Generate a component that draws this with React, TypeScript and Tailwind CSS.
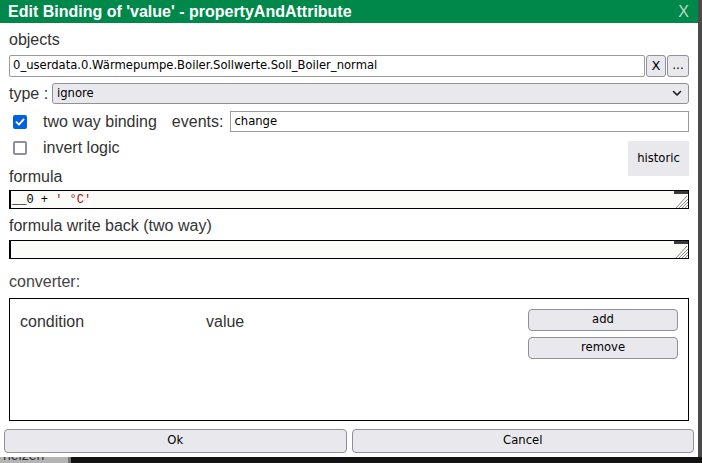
import React from "react";

const ui = { fontFamily: '"DejaVu Sans", sans-serif' };
const lab = { fontFamily: '"Liberation Sans", Arial, sans-serif' };
const mono = { fontFamily: '"Liberation Mono", "DejaVu Sans Mono", monospace' };

function Grip() {
  return (
    <svg width="14" height="17" viewBox="0 0 14 17" className="absolute right-0 top-0">
      <rect x="0" y="0" width="14" height="3" fill="#3a3a3a" />
      <g stroke="#8a8a8a" strokeWidth="1">
        <line x1="13" y1="5" x2="2" y2="17" />
        <line x1="14" y1="8" x2="5" y2="17" />
        <line x1="14" y1="11" x2="8" y2="17" />
        <line x1="14" y1="14" x2="11" y2="17" />
      </g>
    </svg>
  );
}

function Check({ checked }: { checked?: boolean }) {
  return checked ? (
    <span className="flex h-[14px] w-[14px] items-center justify-center rounded-[2px] bg-[#0060df]">
      <svg width="10" height="10" viewBox="0 0 10 10">
        <path d="M1.5 5.2 L4 7.6 L8.6 2.4" stroke="white" strokeWidth="1.8" fill="none" strokeLinecap="round" strokeLinejoin="round" />
      </svg>
    </span>
  ) : (
    <span className="block h-[14px] w-[14px] rounded-[2px] border-2 border-[#8f8f9d] bg-white" />
  );
}

export default function App() {
  return (
    <div className="flex h-[463px] w-[702px] flex-col overflow-hidden bg-[#111]">
      <div className="flex h-[457px]">
        <div className="flex w-[698px] flex-col bg-white">
          <div className="flex h-[23px] items-center justify-between bg-[#00884b] pl-[8px] pr-[9px]">
            <span className="text-[16px] font-bold text-white" style={lab}>
              Edit Binding of 'value' - propertyAndAttribute
            </span>
            <span className="text-[16px] text-[#b9d9c5]" style={lab}>X</span>
          </div>

          <div className="flex flex-col px-[9px] text-[#333]">
            <div className="mt-[8px] h-[18px] text-[16px] leading-[18px]" style={lab}>objects</div>
            <div className="mt-[6px] flex h-[22px] gap-[1px]">
              <div className="flex flex-1 items-center rounded-[2px] border border-[#9a9a9a] bg-white px-[3px] text-[11.6px] text-black" style={ui}>
                0_userdata.0.Wärmepumpe.Boiler.Sollwerte.Soll_Boiler_normal
              </div>
              <div className="flex w-[20px] items-center justify-center rounded-[3px] border border-[#8f8f9d] bg-[#e9e9ed] text-[13px] text-black" style={ui}>X</div>
              <div className="flex w-[22px] items-center justify-center rounded-[3px] border border-[#8f8f9d] bg-[#e9e9ed] pb-[3px] text-[12px] text-black" style={ui}>...</div>
            </div>

            <div className="mt-[6px] flex h-[21px] items-center">
              <span className="w-[43px] text-[16px]" style={lab}>type :</span>
              <div className="flex h-[21px] flex-1 items-center justify-between rounded-[3px] border border-[#8f8f9d] bg-[#e9e9ed] pl-[4px] pr-[6px] text-[11.6px] text-black" style={ui}>
                <span>ignore</span>
                <svg width="10" height="7" viewBox="0 0 10 7">
                  <path d="M1.5 1.5 L5 5 L8.5 1.5" stroke="#1a1a1a" strokeWidth="1.6" fill="none" strokeLinecap="round" strokeLinejoin="round" />
                </svg>
              </div>
            </div>

            <div className="mt-[7px] flex h-[21px] items-center">
              <span className="ml-[4px] mr-[16px]"><Check checked /></span>
              <span className="text-[16px]" style={lab}>two way binding</span>
              <span className="ml-[15px] text-[16px]" style={lab}>events:</span>
              <div className="ml-[7px] flex h-[21px] flex-1 items-center border border-[#9a9a9a] px-[3px] text-[11.6px] text-black" style={ui}>change</div>
            </div>

            <div className="mt-[9px] flex">
              <div className="flex flex-1 flex-col">
                <div className="flex h-[14px] items-center">
                  <span className="ml-[4px] mr-[16px]"><Check /></span>
                  <span className="text-[16px]" style={lab}>invert logic</span>
                </div>
                <div className="mt-[13px] h-[18px] text-[16px] leading-[18px]" style={lab}>formula</div>
              </div>
              <div className="flex h-[35px] w-[61px] items-center justify-center bg-[#e9e9ed] text-[11.6px] text-black" style={ui}>historic</div>
            </div>

            <div className="relative mt-[4px] flex h-[19px] items-center whitespace-pre border border-l-2 border-black bg-[#fbfbf8] pl-[1px] text-[12px]" style={mono}>
              <span className="text-black">{"__0 + "}</span>
              <span className="text-[#a31515]">{"' °C'"}</span>
              <Grip />
            </div>

            <div className="mt-[8px] h-[18px] text-[16px] leading-[18px]" style={lab}>formula write back (two way)</div>
            <div className="relative mt-[5px] h-[19px] border border-l-2 border-black bg-[#fbfbf8]">
              <Grip />
            </div>

            <div className="mt-[14px] h-[18px] text-[16px] leading-[18px] text-[#444]" style={lab}>converter:</div>
            <div className="mt-[7px] flex h-[123px] border border-black pl-[10px] pr-[10px] pt-[10px]">
              <div className="flex flex-1 pt-[1px] text-[16px] text-[#333]" style={lab}>
                <span className="w-[186px]">condition</span>
                <span>value</span>
              </div>
              <div className="flex w-[150px] flex-col gap-[6px]">
                <div className="flex h-[22px] items-center justify-center rounded-[4px] border border-[#8f8f9d] bg-[#e9e9ed] text-[11.6px] text-black" style={ui}>add</div>
                <div className="flex h-[22px] items-center justify-center rounded-[4px] border border-[#8f8f9d] bg-[#e9e9ed] text-[11.6px] text-black" style={ui}>remove</div>
              </div>
            </div>
          </div>

          <div className="mt-[8px] flex gap-[5px] px-[4px]">
            <div className="flex h-[24px] flex-1 items-center justify-center rounded-[4px] border border-[#8f8f9d] bg-[#e9e9ed] text-[11.6px] text-black" style={ui}>Ok</div>
            <div className="flex h-[24px] flex-1 items-center justify-center rounded-[4px] border border-[#8f8f9d] bg-[#e9e9ed] text-[11.6px] text-black" style={ui}>Cancel</div>
          </div>
        </div>
        <div className="flex-1 bg-[#4a4a4a]" />
      </div>
      <div className="flex h-[6px]">
        <div className="relative w-[68px] overflow-hidden bg-[#b4b4b4]">
          <span className="absolute left-[3px] top-[-9px] text-[14px] leading-[14px] text-[#333]" style={lab}>heizen</span>
        </div>
        <div className="w-[3px] bg-[#777]" />
        <div className="flex-1 bg-[#121212]" />
      </div>
    </div>
  );
}
